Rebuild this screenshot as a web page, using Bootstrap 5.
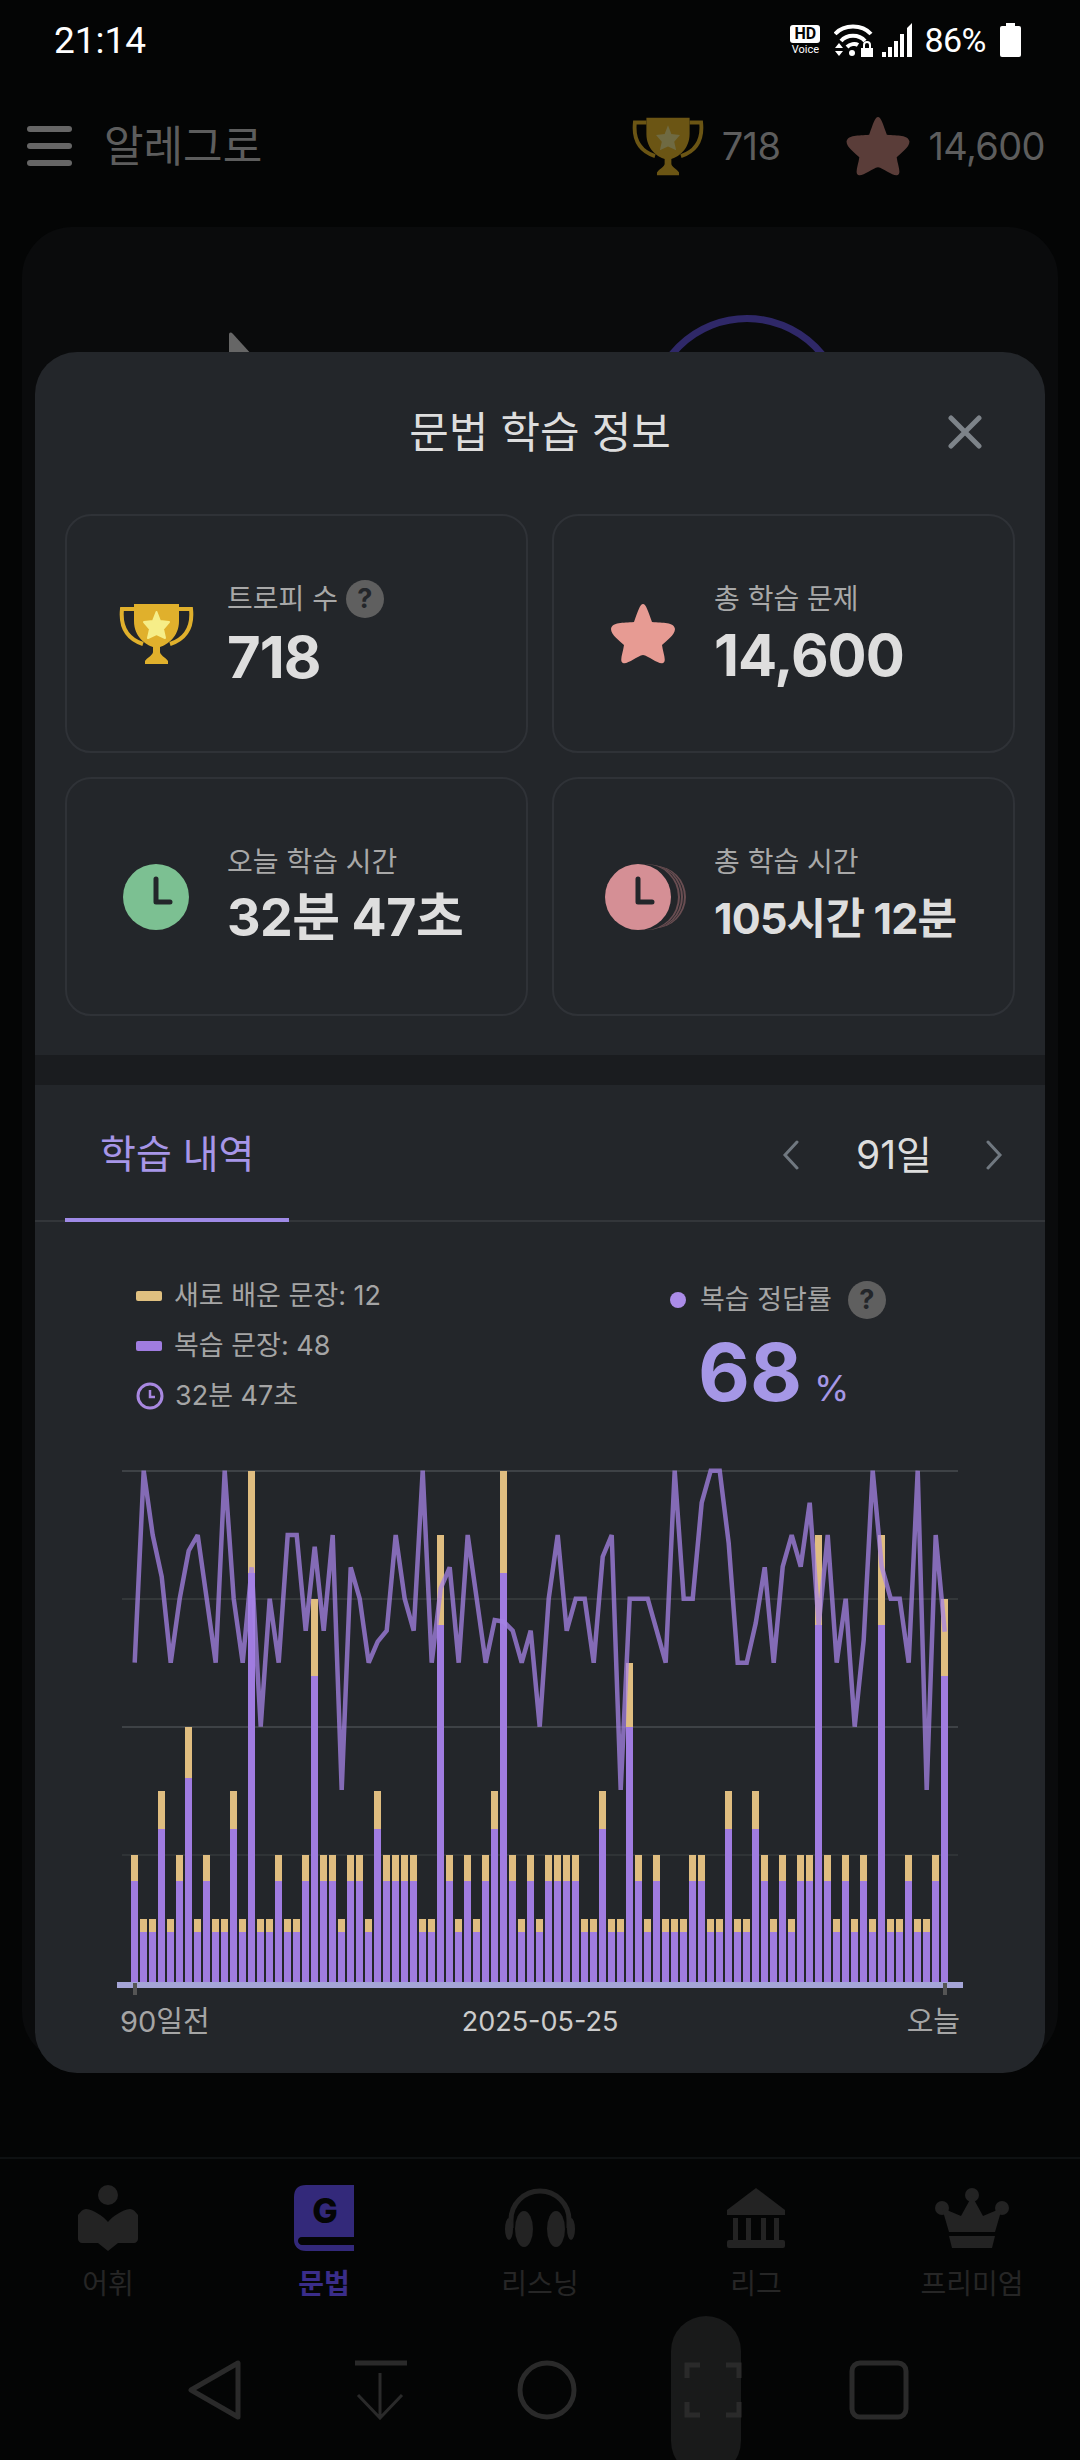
<!DOCTYPE html>
<html lang="ko">
<head>
    <meta charset="UTF-8">
    <meta name="viewport" content="width=device-width, initial-scale=1.0">
    <title>문법 학습 정보</title>
    <link href="https://cdn.jsdelivr.net/npm/bootstrap@5.3.3/dist/css/bootstrap.min.css" rel="stylesheet">
    <style>
        html, body { margin: 0; background: #040505; }
        body { font-family: Inter, "Noto Sans CJK KR", sans-serif; }
        .screen { position: relative; width: 1080px; height: 2460px; overflow: hidden; background: #040505; }

        /* status bar */
        .status-row { height: 80px; padding: 0 59px 0 54px; color: #fff; }
        .status-time { font: 400 37px Roboto, sans-serif; }
        .status-pct { font: 400 34px Roboto, sans-serif; margin: 0 14px 0 10px; letter-spacing: -0.5px; }
        .hd-mark { width: 30px; margin-right: 14px; line-height: 1; text-align: center; }
        .hd-box { display: block; background: #fff; color: #040505; border-radius: 3px; font: 700 16px/18px Roboto, sans-serif; }
        .hd-voice { display: block; font: 400 11px/13px Roboto, sans-serif; }

        /* app bar */
        .app-row { height: 106px; padding: 0 35px 0 27px; margin-top: 13px; color: #5d5d5d; }
        .burger { width: 45px; height: 40px; }
        .burger i { display: block; height: 6px; background: #666; border-radius: 3px; }
        .app-title { font-size: 43px; margin-left: 32px; line-height: 1; }
        .app-num { font-size: 38px; letter-spacing: -0.6px; margin-left: 18px; }
        .app-star { margin-left: 66px; }

        /* faded page behind the sheet */
        .back-card { position: relative; height: 1835px; margin: 28px 22px 0; background: #0a0b0c; border-radius: 50px; }
        .back-tip { position: absolute; left: 207px; top: 105px; }
        .back-ring { position: absolute; left: 625px; top: 88px; width: 200px; height: 200px; border: 7px solid #2f2868; border-radius: 50%; }

        /* sheet */
        .sheet { position: absolute; left: 35px; top: 352px; width: 1010px; height: 1721px; background: #23262a; border-radius: 42px; overflow: hidden; color: #ddd; }
        .sheet-head { position: relative; height: 162px; padding-top: 56px; text-align: center; font-size: 43px; line-height: 48px; }
        .sheet-close { position: absolute; right: 63px; top: 63px; width: 34px; height: 34px; }
        .stat-wrap { display: flow-root; padding: 0 30px; height: 541px; }
        .stat-box { height: 239px; background: transparent; border: 2px solid #2f3237; border-radius: 26px; flex-direction: row; align-items: center; }
        .stat-icon-cell { flex: 0 0 160px; padding-left: 18px; }
        .stat-icon-stack { padding-left: 24px; }
        .stat-label { font-size: 28px; line-height: 34px; color: #a8a8a8; }
        .stat-value { font-weight: 700; color: #dedede; line-height: 62px; margin-top: 8px; letter-spacing: -0.5px; }
        .stat-lg { font-size: 58px; letter-spacing: -1px; }
        .stat-md { font-size: 52px; }
        .stat-sm { font-size: 43px; letter-spacing: -0.8px; }
        .help-dot { display: inline-block; width: 38px; height: 38px; border-radius: 50%; background: #5f5f5f; color: #23262a; font: 700 27px/38px Inter, sans-serif; text-align: center; }
        .sheet-band { height: 30px; background: #1a1c1f; }

        .tab-row { height: 137px; border-bottom: 2px solid #33363a; position: relative; }
        .tab-on { position: absolute; left: 30px; bottom: -2px; width: 224px; height: 88px; border-bottom: 4px solid #9f8ae6; }
        .tab-label { position: absolute; left: 65px; top: 45px; font-size: 39px; line-height: 48px; color: #a796e8; }
        .range-box { position: absolute; left: 747px; top: 50px; width: 221px; height: 40px; }
        .range-text { font-size: 39px; line-height: 40px; color: #ddd; margin-left: 3px; }

        .legend-area { height: 238px; position: relative; font-size: 27px; color: #a5a5a5; }
        .legend-list { position: absolute; left: 101px; top: 49px; }
        .legend-line { height: 50px; }
        .swatch { width: 26px; height: 10px; border-radius: 2px; margin-right: 12px; }
        .swatch-new { background: #e0c080; }
        .swatch-rev { background: #a07ce0; }
        .legend-clock { margin-right: 11px; }
        .rate-box { position: absolute; left: 635px; top: 58px; }
        .rate-dot { width: 16px; height: 16px; border-radius: 50%; background: #ab8ce8; margin-right: 14px; }
        .rate-num { font-size: 80px; font-weight: 700; color: #a597e6; line-height: 1; margin-left: 28px; margin-top: 11px; }
        .rate-unit { font-size: 36px; font-weight: 400; margin-left: 12px; }

        .chart-svg { display: block; }
        .axis-labels { padding: 0 85px; margin-top: 2px; font-size: 29px; line-height: 40px; color: #a5a5a5; }
        .axis-side { flex: 1 1 0; }
        .axis-mid { color: #ccc; font-size: 27px; }

        /* bottom tabs */
        .tabbar { position: absolute; left: 0; right: 0; top: 2157px; height: 303px; background: #040505; border-top: 2px solid #0e1112; }
        .tabbar-items { height: 150px; padding: 26px 0 0 0; }
        .tab-cell { width: 216px; height: 124px; font-size: 28px; line-height: 34px; color: #262626; }
        .tab-cell svg { display: block; height: 66px; margin-bottom: 16px; }
        .tab-cell.tab-active { color: #3a2d8a; font-weight: 700; }
        .sysnav { position: absolute; left: 0; right: 0; bottom: 0; height: 144px; }
        .sys-pill { position: absolute; left: 671px; top: 0; width: 70px; height: 160px; border-radius: 35px; background: #191a1a; }
        .sys-icon { position: absolute; top: 44px; }
        .sys-back { left: 188px; }
        .sys-down { left: 353px; }
        .sys-home { left: 517px; }
        .sys-shot { left: 684px; }
        .sys-recent { left: 849px; }
    </style>
</head>
<body>
<div class="screen d-flex flex-column">

    <div class="status-row d-flex align-items-center justify-content-between">
        <span class="status-time">21:14</span>
        <div class="d-flex align-items-center">
            <div class="hd-mark"><span class="hd-box">HD</span><span class="hd-voice">Voice</span></div>
            <svg width="40" height="34" viewBox="0 0 40 34" fill="none" stroke="#fff" stroke-width="4">
                <path d="M1 11 C10 1 28 1 37 11"/><path d="M7 18 C13 11 25 11 31 18"/><path d="M13 24 C16 21 21 20 24 22"/>
                <path d="M1 25 L5 20 L9 25Z M1 28 L5 33 L9 28Z" fill="#fff" stroke="none"/>
                <circle cx="18" cy="30" r="3" fill="#fff" stroke="none"/>
                <rect x="27" y="25" width="12" height="9" fill="#fff" stroke="none"/>
                <path d="M30 25 V22 A3 3 0 0 1 36 22 V25" stroke-width="2"/>
            </svg>
            <svg class="ms-2" width="32" height="34" viewBox="0 0 32 34" fill="#fff">
                <path d="M0 34 V29 H4 V34Z M6 34 V24 H10 V34Z M12 34 V18 H16 V34Z M18 34 V11 H22 V34Z M25 34 V5 L30 0 V34Z"/>
            </svg>
            <span class="status-pct">86%</span>
            <svg width="21" height="34" viewBox="0 0 21 34" fill="#fff"><rect x="6" y="0" width="9" height="4"/><rect x="0" y="3" width="21" height="31" rx="2"/></svg>
        </div>
    </div>

    <div class="app-row d-flex align-items-center">
        <div class="burger d-flex flex-column justify-content-between"><i></i><i></i><i></i></div>
        <span class="app-title">알레그로</span>
        <div class="ms-auto d-flex align-items-center">
            <svg width="72" height="60" viewBox="0 0 75 61" fill="#6b5514">
                <path d="M15 1 H60 V18 C60 34 48 42 41 44 V49 C41 52 46 54 49 58 V61 H26 V58 C29 54 34 52 34 49 V44 C27 42 15 34 15 18Z"/>
                <path d="M15 6 H3 C1 25 9 36 24 41 M60 6 H72 C74 25 66 36 51 41" fill="none" stroke="#6b5514" stroke-width="4"/>
                <path d="M37.5 9 L41 18 L50 19 L44 26 L46 35 L37.5 31 L29 35 L31 26 L25 19 L34 18Z" fill="#6f6a42"/>
            </svg>
            <span class="app-num">718</span>
            <svg class="app-star" width="64" height="60" viewBox="0 0 64 61" fill="#5a3d39">
                <path d="M32 1 C35 1 37 8 41 19 C52 20 63 19 64 26 C64 32 55 38 51 42 C52 50 56 58 52 60 C48 62 38 53 32 52 C26 53 16 62 12 60 C8 58 12 50 13 42 C9 38 0 32 0 26 C1 19 12 20 23 19 C27 8 29 1 32 1Z"/>
            </svg>
            <span class="app-num">14,600</span>
        </div>
    </div>

    <div class="back-card">
        <svg class="back-tip" width="26" height="24" viewBox="0 0 26 24" fill="#666"><path d="M0 24 V3 C0 0 2 0 4 2 L24 24Z"/></svg>
        <div class="back-ring"></div>
    </div>

    <div class="sheet">
        <div class="sheet-head">
            문법 학습 정보
            <svg class="sheet-close" viewBox="0 0 34 34" stroke="#7d8389" stroke-width="5" stroke-linecap="round" fill="none"><path d="M3 3 L31 31 M31 3 L3 31"/></svg>
        </div>

        <div class="stat-wrap">
            <div class="row g-4">
                <div class="col-6">
                    <div class="card stat-box">
                        <div class="stat-icon-cell d-flex justify-content-center">
                            <svg width="75" height="61" viewBox="0 0 75 61" fill="#e0b02c">
                                <path d="M15 1 H60 V18 C60 34 48 42 41 44 V49 C41 52 46 54 49 58 V61 H26 V58 C29 54 34 52 34 49 V44 C27 42 15 34 15 18Z"/>
                                <path d="M15 6 H3 C1 25 9 36 24 41 M60 6 H72 C74 25 66 36 51 41" fill="none" stroke="#e0b02c" stroke-width="4"/>
                                <path d="M37.5 9 L41 18 L50 19 L44 26 L46 35 L37.5 31 L29 35 L31 26 L25 19 L34 18Z" fill="#f6ee88" stroke="#f6ee88" stroke-width="2" stroke-linejoin="round"/>
                            </svg>
                        </div>
                        <div>
                            <div class="stat-label d-flex align-items-center gap-2">트로피 수 <span class="help-dot">?</span></div>
                            <div class="stat-value stat-lg">718</div>
                        </div>
                    </div>
                </div>
                <div class="col-6">
                    <div class="card stat-box">
                        <div class="stat-icon-cell d-flex justify-content-center">
                            <svg width="64" height="61" viewBox="0 0 64 61" fill="#e79b93">
                                <path d="M32 1 C35 1 37 8 41 19 C52 20 63 19 64 26 C64 32 55 38 51 42 C52 50 56 58 52 60 C48 62 38 53 32 52 C26 53 16 62 12 60 C8 58 12 50 13 42 C9 38 0 32 0 26 C1 19 12 20 23 19 C27 8 29 1 32 1Z"/>
                            </svg>
                        </div>
                        <div>
                            <div class="stat-label">총 학습 문제</div>
                            <div class="stat-value stat-lg">14,600</div>
                        </div>
                    </div>
                </div>
                <div class="col-6">
                    <div class="card stat-box">
                        <div class="stat-icon-cell d-flex justify-content-center">
                            <svg width="66" height="66" viewBox="0 0 66 66">
                                <circle cx="33" cy="33" r="33" fill="#7cc092"/>
                                <path d="M33 15 V38 H47" fill="none" stroke="#23262a" stroke-width="5" stroke-linecap="round" stroke-linejoin="round"/>
                            </svg>
                        </div>
                        <div>
                            <div class="stat-label">오늘 학습 시간</div>
                            <div class="stat-value stat-md">32분 47초</div>
                        </div>
                    </div>
                </div>
                <div class="col-6">
                    <div class="card stat-box">
                        <div class="stat-icon-cell stat-icon-stack d-flex justify-content-center">
                            <svg width="82" height="66" viewBox="0 0 82 66">
                                <circle cx="50" cy="33" r="31" fill="#6a4e52"/>
                                <circle cx="48" cy="33" r="31" fill="#23262a"/>
                                <circle cx="46" cy="33" r="32" fill="#6a4e52"/>
                                <circle cx="44" cy="33" r="32" fill="#23262a"/>
                                <circle cx="42" cy="33" r="33" fill="#6a4e52"/>
                                <circle cx="40" cy="33" r="33" fill="#23262a"/>
                                <circle cx="33" cy="33" r="33" fill="#d58f95"/>
                                <path d="M33 15 V38 H47" fill="none" stroke="#23262a" stroke-width="5" stroke-linecap="round" stroke-linejoin="round"/>
                            </svg>
                        </div>
                        <div>
                            <div class="stat-label">총 학습 시간</div>
                            <div class="stat-value stat-sm">105시간 12분</div>
                        </div>
                    </div>
                </div>
            </div>
        </div>

        <div class="sheet-band"></div>

        <div class="tab-row">
            <div class="tab-on"></div>
            <span class="tab-label">학습 내역</span>
            <div class="range-box d-flex align-items-center justify-content-between">
                <svg width="17" height="30" viewBox="0 0 17 30" fill="none" stroke="#707880" stroke-width="3" stroke-linecap="round"><path d="M15 2 L3 15 L15 28"/></svg>
                <span class="range-text">91일</span>
                <svg width="17" height="30" viewBox="0 0 17 30" fill="none" stroke="#707880" stroke-width="3" stroke-linecap="round"><path d="M2 2 L14 15 L2 28"/></svg>
            </div>
        </div>

        <div class="legend-area">
            <div class="legend-list">
                <div class="legend-line d-flex align-items-center"><span class="swatch swatch-new"></span>새로 배운 문장: 12</div>
                <div class="legend-line d-flex align-items-center"><span class="swatch swatch-rev"></span>복습 문장: 48</div>
                <div class="legend-line d-flex align-items-center">
                    <svg class="legend-clock" width="28" height="28" viewBox="0 0 28 28" fill="none" stroke="#a888e0" stroke-width="3"><circle cx="14" cy="14" r="12"/><path d="M14 8 V15 H19" stroke-width="2.5"/></svg>
                    32분 47초
                </div>
            </div>
            <div class="rate-box">
                <div class="d-flex align-items-center"><span class="rate-dot"></span>복습 정답률<span class="help-dot ms-3">?</span></div>
                <div class="rate-num">68<span class="rate-unit">%</span></div>
            </div>
        </div>

        <svg id="chart" class="chart-svg" width="1010" height="540" viewBox="35 1460 1010 540"></svg>
        <div class="axis-labels d-flex align-items-center">
            <span class="axis-side">90일전</span><span class="axis-mid">2025-05-25</span><span class="axis-side text-end">오늘</span>
        </div>
    </div>

    <div class="tabbar">
        <div class="tabbar-items d-flex">
            <div class="tab-cell d-flex flex-column align-items-center">
                <svg width="60" height="66" viewBox="0 0 60 66" fill="#232323"><circle cx="30" cy="10" r="10"/><path d="M0 30 C3 26 5 24 8 24 C16 25 25 31 30 37 C35 31 44 25 52 24 C55 24 57 26 60 30 V54 C60 56 58 58 56 58 H40 L30 66 L20 58 H4 C2 58 0 56 0 54Z"/></svg>
                어휘
            </div>
            <div class="tab-cell tab-active d-flex flex-column align-items-center">
                <svg width="60" height="66" viewBox="0 0 60 66">
                    <path d="M12 0 H60 V52 H8 C5 52 4 54 4 56 C4 58 6 60 8 60 H60 V66 H12 C4 66 0 61 0 55 V12 C0 4 4 0 12 0Z" fill="#33297a"/>
                    <text x="31" y="38" text-anchor="middle" font-family="Inter, sans-serif" font-weight="800" font-size="34" fill="#040505">G</text>
                </svg>
                문법
            </div>
            <div class="tab-cell d-flex flex-column align-items-center">
                <svg width="70" height="60" viewBox="0 0 70 60" fill="#232323">
                    <path d="M6 40 V32 A29 29 0 0 1 64 32 V40" fill="none" stroke="#232323" stroke-width="5"/>
                    <ellipse cx="19" cy="41" rx="9" ry="18"/><ellipse cx="51" cy="41" rx="9" ry="18"/>
                    <ellipse cx="4" cy="41" rx="4" ry="11"/><ellipse cx="66" cy="41" rx="4" ry="11"/>
                </svg>
                리스닝
            </div>
            <div class="tab-cell d-flex flex-column align-items-center">
                <svg width="58" height="60" viewBox="0 0 58 60" fill="#232323">
                    <path d="M29 0 L58 22 V27 H0 V22Z"/>
                    <rect x="6" y="30" width="5" height="22"/><rect x="19" y="30" width="5" height="22"/><rect x="34" y="30" width="5" height="22"/><rect x="47" y="30" width="5" height="22"/>
                    <rect x="0" y="52" width="58" height="8" rx="2"/>
                </svg>
                리그
            </div>
            <div class="tab-cell d-flex flex-column align-items-center">
                <svg width="74" height="60" viewBox="0 0 74 60" fill="#232323">
                    <circle cx="37" cy="7" r="7"/><circle cx="7" cy="20" r="7"/><circle cx="67" cy="20" r="7"/>
                    <path d="M37 8 L48 28 L67 20 L60 44 H14 L7 20 L26 28Z"/>
                    <path d="M14 48 H60 L57 60 H17Z"/>
                </svg>
                프리미엄
            </div>
        </div>

        <div class="sysnav">
            <div class="sys-pill"></div>
            <svg class="sys-icon sys-back" width="54" height="60" viewBox="0 0 54 60" fill="none" stroke="#2a2a2a" stroke-width="5" stroke-linejoin="round"><path d="M50 3 V57 L3 30Z"/></svg>
            <svg class="sys-icon sys-down" width="56" height="60" viewBox="0 0 56 60" fill="none" stroke="#2a2a2a"><path d="M2 3 H54" stroke-width="5"/><path d="M27 13 V56 M5 35 L27 58 L49 35" stroke-width="3"/></svg>
            <svg class="sys-icon sys-home" width="60" height="60" viewBox="0 0 60 60" fill="none" stroke="#2a2a2a" stroke-width="5"><circle cx="30" cy="30" r="27"/></svg>
            <svg class="sys-icon sys-shot" width="58" height="60" viewBox="0 0 58 60" fill="none" stroke="#2a2a2a" stroke-width="5"><path d="M3 18 V5 H16 M42 5 H55 V18 M3 42 V55 H16 M42 55 H55 V42"/></svg>
            <svg class="sys-icon sys-recent" width="60" height="60" viewBox="0 0 60 60" fill="none" stroke="#2a2a2a" stroke-width="5"><rect x="3" y="3" width="54" height="54" rx="8"/></svg>
        </div>
    </div>
</div>

<script src="https://cdn.jsdelivr.net/npm/bootstrap@5.3.3/dist/js/bootstrap.bundle.min.js"></script>
<script>
    // 차트 데이터: [전체 높이, 복습 높이]
    const levels = {
        A: [64, 51], B: [128, 102], C: [192, 154], D: [256, 205],
        E: [448, 358], F: [512, 410], G: [384, 307], H: [320, 256]
    };
    const bars = 'BAACABDABAAC' + 'AFAABAABGBBA' + 'BBACBBBBAAEB' + 'ABABCFBABABB' + 'BBAACAAHBABA' + 'AABBAACAACBA' + 'BABBEBABABAE' + 'AABAABG';
    const rates = [668,92,285,410,668,476,332,285,476,668,92,476,668,382,860,476,668,285,285,572,320,572,285,1050,382,476,668,605,572,285,476,572,92,668,445,382,668,285,476,668,540,545,572,668,572,860,476,285,572,476,476,668,350,285,1050,476,476,476,572,668,92,476,476,188,92,92,310,668,668,550,382,668,380,285,380,188,555,285,668,476,860,600,92,380,476,476,668,92,1050,285,575];

    let html = '';
    [[1471, '#3e4246'], [1599, '#34383a'], [1727, '#3e4246'], [1855, '#2f3336']].forEach(([y, color]) => {
        html += `<rect x="122" y="${y - 1}" width="836" height="2" fill="${color}"/>`;
    });
    bars.split('').forEach((key, i) => {
        const x = 131 + 9 * i;
        const [total, review] = levels[key];
        html += `<rect x="${x}" y="${1983 - total}" width="7" height="${total - review}" fill="#dfbd80"/>`;
        html += `<rect x="${x}" y="${1983 - review}" width="7" height="${review}" fill="#a07ce0"/>`;
    });
    html += '<rect x="117" y="1982" width="846" height="6" fill="#a5a5d8"/>';
    html += '<rect x="133" y="1983" width="4" height="12" fill="#555"/><rect x="943" y="1983" width="4" height="12" fill="#555"/>';
    const points = rates.map((v, i) => `${134.7 + 9 * i},${(1440 + v / 3).toFixed(1)}`).join(' ');
    html += `<polyline points="${points}" fill="none" stroke="#a583e6" stroke-opacity="0.75" stroke-width="4.5" stroke-linejoin="miter" stroke-miterlimit="3"/>`;
    document.getElementById('chart').innerHTML = html;
</script>
</body>
</html>
